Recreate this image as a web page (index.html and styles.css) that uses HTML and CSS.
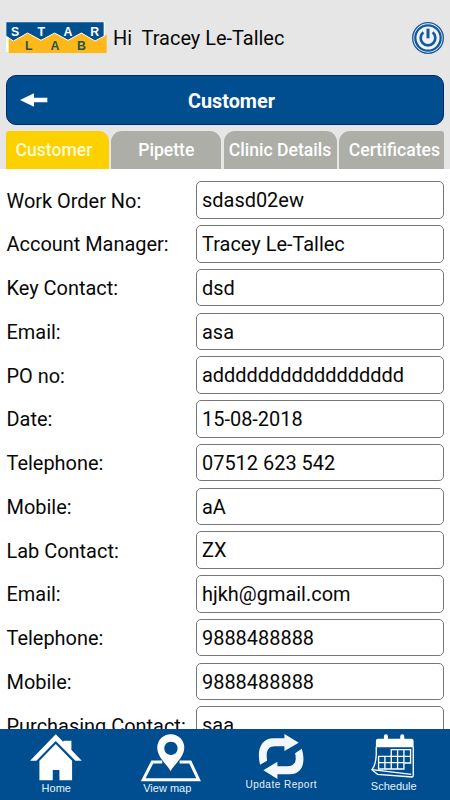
FILE: index.html
```html
<!DOCTYPE html>
<html lang="en">
<head>
    <meta charset="UTF-8">
    <meta name="viewport" content="width=device-width, initial-scale=1.0">
    <title>Customer</title>
    <link rel="stylesheet" href="styles.css">
</head>
<body>
    <div class="header">
        <div class="user-bar">
            <svg class="logo" viewBox="0 0 303 93" role="img" aria-label="Star Lab">
                <rect width="296" height="90" fill="#fff"/>
                <path fill="#ffb819" d="M8 93V44l16 10 43-22 39 22 40-22 40 22 39-22 39 22 38-16v55z"/>
                <path fill="#00508f" d="M1 1h292v42l-26 14-41-24-40 22-40-22-41 22-40-22-43 24-21-14z"/>
                <path fill="none" stroke="#fff" stroke-width="3" d="M1 43l21 14 43-24 40 22 41-22 40 22 40-22 41 24 30-16"/>
                <g class="logo-text" fill="#fff">
                    <text x="27" y="41">S</text>
                    <text x="106" y="41">T</text>
                    <text x="186" y="41">A</text>
                    <text x="266" y="41">R</text>
                </g>
                <g class="logo-text" fill="#24564f">
                    <text x="68" y="84">L</text>
                    <text x="147" y="84">A</text>
                    <text x="226" y="84">B</text>
                </g>
            </svg>
            <div class="greeting">Hi&nbsp; Tracey Le-Tallec</div>
            <svg class="power" viewBox="0 0 96 96" fill="none" stroke="#17599a">
                <circle cx="48" cy="48" r="46" fill="#e3edf5" stroke-width="4"/>
                <circle cx="48" cy="48" r="38" fill="#eef3f7" stroke-width="7"/>
                <path d="M34 31a22 22 0 1 0 28 0" stroke-width="8"/>
                <path d="M48 20v29" stroke-width="9"/>
            </svg>
        </div>
        <div class="title-bar">
            <svg class="back" viewBox="0 0 84 42">
                <path fill="#fff" d="M0 21L42 1v13h40v14H42v13z"/>
            </svg>
            <h1>Customer</h1>
        </div>
        <div class="tabs">
            <div class="tab tab-first active">Customer</div>
            <div class="tab tab-second">Pipette</div>
            <div class="tab tab-third">Clinic Details</div>
            <div class="tab tab-last">Certificates</div>
        </div>
    </div>

    <div class="form">
        <div class="row"><label>Work Order No:</label><div class="field">sdasd02ew</div></div>
        <div class="row"><label>Account Manager:</label><div class="field">Tracey Le-Tallec</div></div>
        <div class="row"><label>Key Contact:</label><div class="field">dsd</div></div>
        <div class="row"><label>Email:</label><div class="field">asa</div></div>
        <div class="row"><label>PO no:</label><div class="field">addddddddddddddddd</div></div>
        <div class="row"><label>Date:</label><div class="field">15-08-2018</div></div>
        <div class="row"><label>Telephone:</label><div class="field">07512 623 542</div></div>
        <div class="row"><label>Mobile:</label><div class="field">aA</div></div>
        <div class="row"><label>Lab Contact:</label><div class="field">ZX</div></div>
        <div class="row"><label>Email:</label><div class="field">hjkh@gmail.com</div></div>
        <div class="row"><label>Telephone:</label><div class="field">9888488888</div></div>
        <div class="row"><label>Mobile:</label><div class="field">9888488888</div></div>
        <div class="row"><label>Purchasing Contact:</label><div class="field">saa</div></div>
    </div>

    <div class="nav">
        <div class="nav-item">
            <svg viewBox="78.75 98 180 144" fill="#fff">
                <path d="M168 102l23 23v-4h24v28l31 32h-19l-59-59-58 59H91z"/>
                <path d="M168 131l49 50v59h-38v-31h-20v31h-40v-59z"/>
            </svg>
            <span>Home</span>
        </div>
        <div class="nav-item">
            <svg viewBox="416.25 98 180 144">
                <path fill="none" stroke="#fff" stroke-width="9" d="M486 185h-30l-27 53h166l-25-53h-32"/>
                <path fill="#fff" fill-rule="evenodd" d="M511 213c-10-20-40-43-40-71a40 40 0 0 1 81 0c0 28-31 51-41 71zM512 124a20 20 0 1 0 .1 0z"/>
            </svg>
            <span class="label-map">View map</span>
        </div>
        <div class="nav-item">
            <svg viewBox="78.75 98 180 144" fill="#f3f7fc">
                <path d="M106 193c-10-39 0-79 41-79h32v-13l43 26-43 25v-14h-28c-22 0-28 15-24 43z"/>
                <path d="M231 145c12 39 4 77-37 77h-36v14l-42-26 42-26v14h29c22 0 30-14 24-39z"/>
            </svg>
            <span class="label-report">Update Report</span>
        </div>
        <div class="nav-item">
            <svg viewBox="416.25 98 180 144" fill="none" stroke="#fff" stroke-width="4">
                <path fill="#fff" stroke="none" d="M452 141v-20q0-6 6-6h18v-7q0-6 6-6t6 6v7h37v-7q0-6 6-6t6 6v7h22q6 0 6 6v20z"/>
                <path d="M453 139v23q-1 32-13 46l17 14 104 8q3 0 3-5v-86" stroke-width="4"/>
                <path d="M441 208l117 14"/>
                <path d="M498 148h58v40h-20v18h-76v-38h38zM517 148v58M536 148v40M479 168v38M498 168v38M498 168h58M460 187h76"/>
            </svg>
            <span class="label-schedule">Schedule</span>
        </div>
    </div>
</body>
</html>
```

FILE: styles.css
```css
* {
    margin: 0;
    padding: 0;
    box-sizing: border-box;
}

body {
    display: flex;
    flex-direction: column;
    height: 100vh;
    overflow: hidden;
    background: #fff;
    color: #080808;
    font-family: Roboto, sans-serif;
    font-size: 19.95px;
}

.header {
    flex: none;
    height: 169px;
    padding: 0 6px;
    background: #e6e6e6;
}

.user-bar {
    display: flex;
    align-items: center;
    height: 75px;
}

.logo {
    width: 101px;
    height: 31px;
}

.logo-text {
    font-family: "Liberation Sans", sans-serif;
    font-size: 37px;
    font-weight: bold;
    text-anchor: middle;
}

.greeting {
    flex: 1;
    margin-left: 6px;
}

.power {
    width: 32px;
    height: 32px;
}

.title-bar {
    display: flex;
    align-items: center;
    height: 50px;
    padding: 0 13px;
    background: #004e90;
    border: 1px solid #00286c;
    border-radius: 10px;
    color: #fff;
}

.back {
    width: 28px;
    height: 14px;
}

.title-bar h1 {
    flex: 1;
    padding: 2px 15px 0 0;
    font-size: 19.8px;
    font-weight: 700;
    text-align: center;
}

.tabs {
    display: grid;
    grid-template-columns: 103px 110px 113px 105px;
    gap: 2.3px;
    margin-top: 6px;
}

.tab {
    height: 38px;
    line-height: 39px;
    background: #adaea8;
    color: #fff;
    font-size: 17.6px;
    font-weight: 500;
    text-align: center;
    white-space: nowrap;
}

.tab-first {
    padding-right: 7px;
    border-radius: 3px 10px 0 0;
}

.tab-second,
.tab-third {
    border-radius: 11px 11px 0 0;
}

.tab-last {
    padding-left: 6px;
    border-radius: 11px 3px 0 0;
}

.tab.active {
    background: #fdd000;
    color: #fffbd5;
}

.form {
    flex: 1;
    min-height: 0;
    padding: 12.3px 6.5px 0;
    overflow: hidden;
}

.row {
    display: flex;
    align-items: center;
    height: 37.5px;
    margin-bottom: 6.25px;
}

.row label {
    width: 189.5px;
    padding-top: 1px;
    white-space: nowrap;
}

.field {
    flex: 1;
    height: 37.5px;
    padding-left: 5px;
    border: 1px solid #777;
    border-radius: 5px;
    line-height: 36.5px;
}

.nav {
    display: flex;
    flex: none;
    height: 71.5px;
    padding-top: 4px;
    background: #004e90;
}

.nav-item {
    display: flex;
    flex: 1;
    flex-direction: column;
    align-items: center;
    color: #e8f2fb;
    font-family: "Liberation Sans", sans-serif;
    font-size: 11px;
    line-height: 14px;
}

.nav-item svg {
    flex: none;
    width: 60px;
    height: 48px;
    overflow: visible;
}

.label-map {
    margin-right: 3px;
}

.label-report {
    margin-top: -3px;
    font-size: 10px;
    letter-spacing: 0.5px;
}

.label-schedule {
    margin-top: -2px;
}
```
